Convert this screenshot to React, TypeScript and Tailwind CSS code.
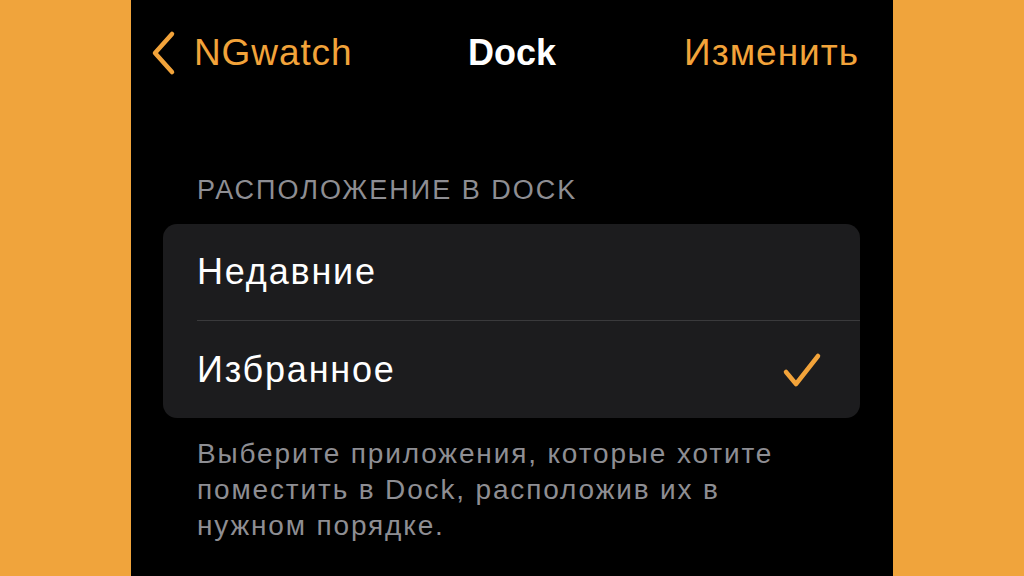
const font = { fontFamily: '"Liberation Sans", "Noto Sans", sans-serif' };

function Chevron() {
  return (
    <svg width="28" height="46" viewBox="0 0 28 46" fill="none">
      <path d="M22 4 L5 23 L22 42" stroke="#f2a33a" strokeWidth="4.5" strokeLinecap="round" strokeLinejoin="round" />
    </svg>
  );
}

function Check() {
  return (
    <svg width="40" height="36" viewBox="0 0 40 36" fill="none">
      <path d="M4 20 L14 32 L36 4" stroke="#f2a33a" strokeWidth="4.5" strokeLinecap="round" strokeLinejoin="round" />
    </svg>
  );
}

export default function App() {
  return (
    <div className="w-[1024px] h-[576px] bg-[#f0a43c] flex justify-center overflow-hidden" style={font}>
      <div className="w-[762px] h-[576px] bg-black flex flex-col">
        {/* nav bar */}
        <div className="relative h-[104px] flex items-center justify-between pl-[19px] pr-[34px] mt-[1px]">
          <div className="flex items-center gap-[16px] text-[#f2a33a] text-[37px] tracking-[0.9px]">
            <Chevron />
            <span>NGwatch</span>
          </div>
          <span className="absolute left-1/2 -translate-x-1/2 text-white text-[36px] font-bold">Dock</span>
          <span className="text-[#f2a33a] text-[37px] tracking-[1px]">Изменить</span>
        </div>

        <div className="px-[32px] pt-[70px]">
          <div className="pl-[34px] text-[#8e8e93] text-[27px] tracking-[2px] leading-[30px]">
            РАСПОЛОЖЕНИЕ В DOCK
          </div>

          <div className="mt-[19px] w-[697px] rounded-[14px] bg-[#1c1c1e] overflow-hidden">
            <div className="h-[96px] flex items-center pl-[34px] text-white text-[36px] tracking-[1.8px]">
              Недавние
            </div>
            <div className="ml-[34px] h-px bg-[#3a3a3c]" />
            <div className="h-[97px] flex items-center justify-between pl-[34px] pr-[38px] text-white text-[36px] tracking-[1.8px]">
              <span>Избранное</span>
              <Check />
            </div>
          </div>

          <div className="pl-[34px] pt-[18px] text-[#8e8e93] text-[28px] leading-[36px] tracking-[1.85px]">
            Выберите приложения, которые хотите
            <br />
            поместить в Dock, расположив их в
            <br />
            нужном порядке.
          </div>
        </div>
      </div>
    </div>
  );
}
